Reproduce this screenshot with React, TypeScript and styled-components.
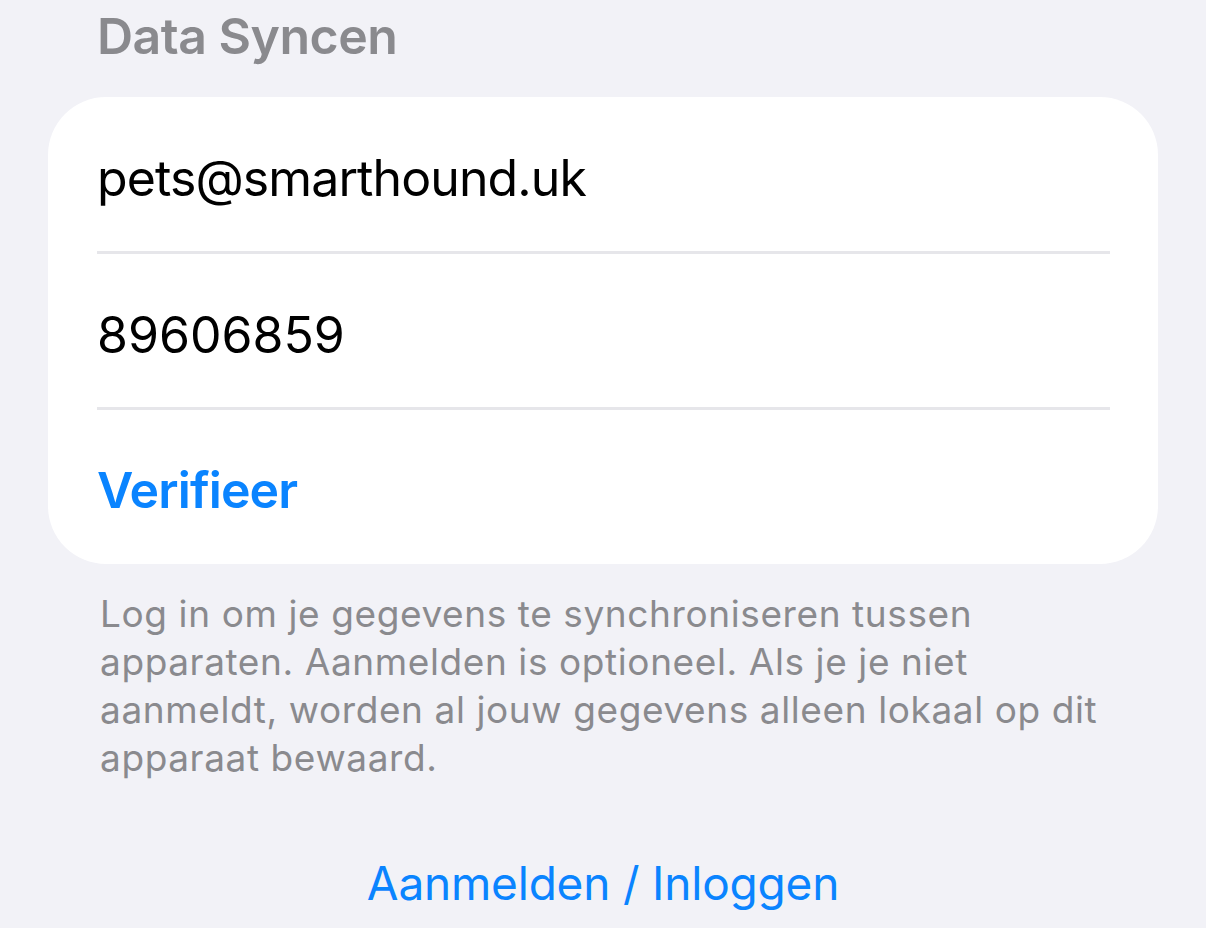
import React from "react";
import styled, { createGlobalStyle } from "styled-components";

const Global = createGlobalStyle`
  html, body { margin: 0; padding: 0; background: #F2F2F7; }
  body { font-family: Inter, "Noto Sans", "Liberation Sans", sans-serif; -webkit-font-smoothing: antialiased; }
`;

const Page = styled.div`
  width: 1206px;
  height: 928px;
  overflow: hidden;
  background: #F2F2F7;
  display: flex;
  flex-direction: column;
  padding: 0 48px;
  box-sizing: border-box;
`;

const SectionTitle = styled.h2`
  margin: 0;
  padding: 5px 0 0 49px;
  font-size: 50px;
  line-height: 62px;
  font-weight: 600;
  color: #8A8A8E;
  letter-spacing: -0.5px;
`;

const Card = styled.div`
  margin-top: 30px;
  background: #ffffff;
  border-radius: 58px;
  display: flex;
  flex-direction: column;
  padding: 0 48px 0 49px;
`;

const Row = styled.div<{ $height: number; $divider?: boolean }>`
  height: ${(p) => p.$height}px;
  padding-top: ${(p) => (p.$divider ? 8 : 6)}px;
  display: flex;
  align-items: center;
  border-bottom: ${(p) => (p.$divider ? "3px solid #E6E6EA" : "none")};
  box-sizing: border-box;
`;

const Value = styled.span<{ $accent?: boolean }>`
  font-size: 50px;
  font-weight: ${(p) => (p.$accent ? 600 : 400)};
  color: ${(p) => (p.$accent ? "#0A84FF" : "#000000")};
  letter-spacing: ${(p) => (p.$accent ? "-0.9px" : "-0.9px")};
`;

const Number = styled(Value)`
  letter-spacing: 0px;
`;

const Footnote = styled.p`
  margin: 26px 0 0 52px;
  padding-right: 30px;
  font-size: 37px;
  line-height: 48px;
  color: #8A8A8E;
  letter-spacing: 0.6px;
`;

const LinkButton = styled.button`
  margin: 70px auto 0;
  border: none;
  background: none;
  padding: 0;
  font-family: inherit;
  font-size: 46px;
  line-height: 62px;
  color: #0A84FF;
  letter-spacing: -0.2px;
  cursor: pointer;
`;

export default function App() {
  return (
    <>
      <Global />
      <Page>
        <SectionTitle>Data Syncen</SectionTitle>
        <Card>
          <Row $height={157} $divider>
            <Value>pets@smarthound.uk</Value>
          </Row>
          <Row $height={156} $divider>
            <Number>89606859</Number>
          </Row>
          <Row $height={154}>
            <Value $accent>Verifieer</Value>
          </Row>
        </Card>
        <Footnote>
          Log in om je gegevens te synchroniseren tussen apparaten. Aanmelden is optioneel. Als je je niet aanmeldt, worden al jouw gegevens alleen lokaal op dit apparaat bewaard.
        </Footnote>
        <LinkButton>Aanmelden / Inloggen</LinkButton>
      </Page>
    </>
  );
}
